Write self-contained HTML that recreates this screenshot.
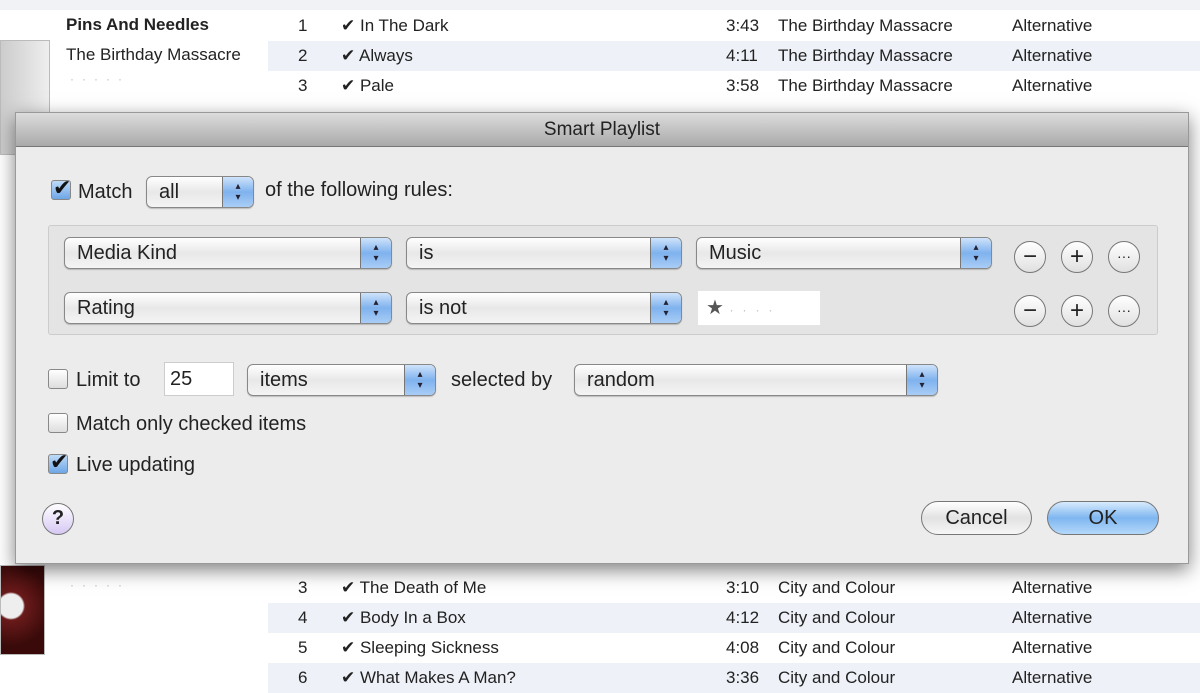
<!DOCTYPE html><html><head><style>
*{margin:0;padding:0;box-sizing:border-box}
body{width:1200px;height:675px;overflow:hidden;background:#fff;font-family:"Liberation Sans",sans-serif;position:relative;color:#222}
.row{position:absolute;left:268px;width:932px;height:30px;font-size:17px;line-height:30px}
.row span{position:absolute}
.alt{background:#eef2f8}
.abs{position:absolute}
.dlg{position:absolute;left:15px;top:112px;width:1174px;height:452px;background:#ececec;box-shadow:0 6px 18px rgba(0,0,0,.5);border:1px solid #999}
.title{height:34px;background:linear-gradient(#dcdcdc,#aaaaaa);border-bottom:1px solid #777;text-align:center;font-size:19px;line-height:34px;color:#222}
.t{position:absolute;font-size:20px;color:#222}
.pop{position:absolute;height:32px;border:1px solid #888;border-radius:6px;background:linear-gradient(#fff,#e8e8e8 50%,#f4f4f4);font-size:20px;line-height:30px;padding-left:12px;box-shadow:0 1px 1px rgba(0,0,0,.2);overflow:hidden}
.pop:after{content:"▴\A▾";white-space:pre;position:absolute;right:0;top:0;bottom:0;width:30px;background:linear-gradient(#cfe3fb,#7fb2ee 50%,#a9cdf6);font-size:10px;line-height:11px;text-align:center;padding-top:4px;color:#223;border-left:1px solid #777}
.cb{position:absolute;width:20px;height:20px;border:1px solid #888;border-radius:3px;background:linear-gradient(#fff,#ddd)}
.cb.on{background:linear-gradient(#bfdaf7,#6ea6e6)}
.cb.on:after{content:"✔";position:absolute;left:1px;top:-6px;font-size:22px;color:#111}
.rb{position:absolute;width:32px;height:32px;border-radius:50%;border:1px solid #777;background:linear-gradient(#fff,#e0e0e0);text-align:center;font-size:24px;line-height:29px;color:#222}
.btn{position:absolute;height:34px;border-radius:17px;border:1px solid #777;font-size:20px;line-height:32px;text-align:center}
</style></head><body>
<div class="abs" style="left:0;top:0;width:1200px;height:10px;background:#f0f2f5"></div>
<div class="abs" style="left:0;top:40px;width:50px;height:115px;background:linear-gradient(90deg,#ccc,#eee);border:1px solid #bbb"></div>
<div class="abs" style="left:66px;top:15px;font-size:17px;font-weight:bold">Pins And Needles</div>
<div class="abs" style="left:66px;top:45px;font-size:17px">The Birthday Massacre</div>
<div class="abs" style="left:70px;top:72px;font-size:12px;color:#bbb;letter-spacing:8px">·····</div>
<div class="row" style="top:11px"><span style="left:30px">1</span><span style="left:73px">✔ In The Dark</span><span style="left:458px">3:43</span><span style="left:510px">The Birthday Massacre</span><span style="left:744px">Alternative</span></div>
<div class="row alt" style="top:41px"><span style="left:30px">2</span><span style="left:73px">✔ Always</span><span style="left:458px">4:11</span><span style="left:510px">The Birthday Massacre</span><span style="left:744px">Alternative</span></div>
<div class="row" style="top:71px"><span style="left:30px">3</span><span style="left:73px">✔ Pale</span><span style="left:458px">3:58</span><span style="left:510px">The Birthday Massacre</span><span style="left:744px">Alternative</span></div>
<div class="abs" style="left:0;top:565px;width:45px;height:90px;background:radial-gradient(circle at 10px 40px,#eee 12px,#6a1a1a 14px,#3a0a0a 40px);border:1px solid #bbb"></div>
<div class="abs" style="left:70px;top:578px;font-size:12px;color:#bbb;letter-spacing:8px">·····</div>
<div class="row" style="top:573px"><span style="left:30px">3</span><span style="left:73px">✔ The Death of Me</span><span style="left:458px">3:10</span><span style="left:510px">City and Colour</span><span style="left:744px">Alternative</span></div>
<div class="row alt" style="top:603px"><span style="left:30px">4</span><span style="left:73px">✔ Body In a Box</span><span style="left:458px">4:12</span><span style="left:510px">City and Colour</span><span style="left:744px">Alternative</span></div>
<div class="row" style="top:633px"><span style="left:30px">5</span><span style="left:73px">✔ Sleeping Sickness</span><span style="left:458px">4:08</span><span style="left:510px">City and Colour</span><span style="left:744px">Alternative</span></div>
<div class="row alt" style="top:663px"><span style="left:30px">6</span><span style="left:73px">✔ What Makes A Man?</span><span style="left:458px">3:36</span><span style="left:510px">City and Colour</span><span style="left:744px">Alternative</span></div>

<div class="dlg">
<div class="title">Smart Playlist</div>
<div class="cb on" style="left:35px;top:67px"></div>
<div class="t" style="left:62px;top:68px">Match</div>
<div class="pop" style="left:130px;top:63px;width:108px">all</div>
<div class="t" style="left:249px;top:66px">of the following rules:</div>
<div class="abs" style="left:32px;top:112px;width:1110px;height:110px;border:1px solid #ccc;border-radius:3px;background:#e4e4e4"></div>
<div class="pop" style="left:48px;top:124px;width:328px">Media Kind</div>
<div class="pop" style="left:390px;top:124px;width:276px">is</div>
<div class="pop" style="left:680px;top:124px;width:296px">Music</div>
<div class="pop" style="left:48px;top:179px;width:328px">Rating</div>
<div class="pop" style="left:390px;top:179px;width:276px">is not</div>
<div class="abs" style="left:682px;top:178px;width:122px;height:34px;background:#fff;font-size:20px;line-height:34px;padding-left:8px;color:#555">★ <span style="font-size:12px;color:#bbb;letter-spacing:9px">····</span></div>
<div class="rb" style="left:998px;top:128px">−</div><div class="rb" style="left:1045px;top:128px">+</div><div class="rb" style="left:1092px;top:128px;font-size:14px">···</div>
<div class="rb" style="left:998px;top:182px">−</div><div class="rb" style="left:1045px;top:182px">+</div><div class="rb" style="left:1092px;top:182px;font-size:14px">···</div>
<div class="cb" style="left:32px;top:256px"></div>
<div class="t" style="left:60px;top:256px">Limit to</div>
<div class="abs" style="left:148px;top:249px;width:70px;height:34px;background:#fff;border:1px solid #ccc;font-size:20px;line-height:32px;padding-left:5px">25</div>
<div class="pop" style="left:231px;top:251px;width:189px">items</div>
<div class="t" style="left:435px;top:256px">selected by</div>
<div class="pop" style="left:558px;top:251px;width:364px">random</div>
<div class="cb" style="left:32px;top:300px"></div>
<div class="t" style="left:60px;top:300px">Match only checked items</div>
<div class="cb on" style="left:32px;top:341px"></div>
<div class="t" style="left:60px;top:341px">Live updating</div>
<div class="rb" style="left:26px;top:390px;background:linear-gradient(#fff,#d6c8f4);font-size:20px;font-weight:bold">?</div>
<div class="btn" style="left:905px;top:388px;width:111px;background:linear-gradient(#fff,#e2e2e2 50%,#f6f6f6)">Cancel</div>
<div class="btn" style="left:1031px;top:388px;width:112px;background:linear-gradient(#d8ebfd,#7fb6f0 50%,#b4d8fa)">OK</div>
</div>
</body></html>
